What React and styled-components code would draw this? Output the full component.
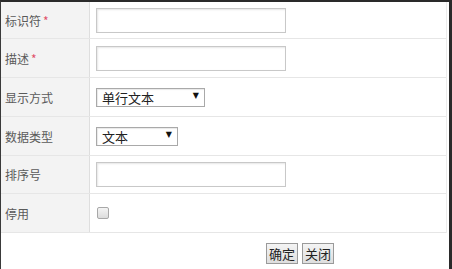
import React from "react";
import styled, { createGlobalStyle } from "styled-components";

const Global = createGlobalStyle`
  html, body { margin: 0; padding: 0; background: #fff; }
  body { font-family: "Noto Sans CJK SC", "Microsoft YaHei", sans-serif; }
`;

const Frame = styled.div`
  box-sizing: border-box;
  width: 452px;
  height: 269px;
  border-top: 2px solid #2a2a2a;
  border-left: 1px solid #3a3a3a;
  border-right: 3px solid #2a2a2a;
  background: #fff;
  display: flex;
  flex-direction: column;
`;

const Table = styled.div`
  display: flex;
  flex-direction: column;
  margin-right: 2px;
  border-right: 1px solid #ececec;
`;

const Row = styled.div`
  box-sizing: border-box;
  display: grid;
  grid-template-columns: 89px 1fr;
  height: ${(p) => p.$h}px;
  border-bottom: 1px solid #e6e6e6;
`;

const Label = styled.div`
  background: #f3f3f3;
  border-right: 1px solid #dedede;
  display: flex;
  align-items: center;
  padding-left: 4px;
  font-size: 12px;
  color: #5a5a5a;
`;

const Star = styled.span`
  color: #e0506a;
  margin-left: 2px;
`;

const Cell = styled.div`
  display: flex;
  align-items: center;
  padding-left: 6px;
`;

const TextInput = styled.input`
  box-sizing: border-box;
  width: 190px;
  height: 25px;
  border: 1px solid #c8c8c8;
  box-shadow: inset 1px 1px 2px #e6e6e6;
  outline: none;
  margin: 0;
  padding: 0 4px;
  background: #fff;
`;

const SelectBox = styled.div`
  position: relative;
  box-sizing: border-box;
  width: ${(p) => p.$w}px;
  height: 19px;
  border: 1px solid #a9a9a9;
  box-shadow: inset 1px 1px 1px #e8e8e8;
  background: #fff;
  display: flex;
  align-items: center;
  padding-left: 5px;
  font-size: 13px;
  color: #222;
`;

const Arrow = styled.span`
  position: absolute;
  right: 5px;
  top: 2px;
  font-size: 8px;
  color: #111;
  font-family: "DejaVu Sans", sans-serif;
`;

const Check = styled.span`
  box-sizing: border-box;
  width: 12px;
  height: 12px;
  margin-left: 1px;
  border: 1px solid #a8a8a8;
  border-radius: 2px;
  background: linear-gradient(#f4f4f4, #dcdcdc);
`;

const Footer = styled.div`
  display: flex;
  gap: 4px;
  padding-left: 265px;
  padding-top: 10px;
`;

const Button = styled.button`
  box-sizing: border-box;
  height: 21px;
  padding: 0 2px;
  margin: 0;
  border: 1px solid #9a9a9a;
  background: linear-gradient(#f4f4f4, #dedede);
  font-family: "Noto Sans CJK SC", sans-serif;
  font-size: 13px;
  line-height: 17px;
  color: #222;
`;

const rows = [
  { label: "标识符", req: true, kind: "input", h: 37 },
  { label: "描述", req: true, kind: "input", h: 39 },
  { label: "显示方式", kind: "select", value: "单行文本", w: 109, h: 39 },
  { label: "数据类型", kind: "select", value: "文本", w: 82, h: 39 },
  { label: "排序号", kind: "input", h: 38 },
  { label: "停用", kind: "check", h: 39 },
];

export default function App() {
  return (
    <>
      <Global />
      <Frame>
        <Table>
          {rows.map((r) => (
            <Row key={r.label} $h={r.h}>
              <Label>
                {r.label}
                {r.req && <Star>*</Star>}
              </Label>
              <Cell>
                {r.kind === "input" && <TextInput type="text" />}
                {r.kind === "select" && (
                  <SelectBox $w={r.w}>
                    {r.value}
                    <Arrow>▼</Arrow>
                  </SelectBox>
                )}
                {r.kind === "check" && <Check />}
              </Cell>
            </Row>
          ))}
        </Table>
        <Footer>
          <Button>确定</Button>
          <Button>关闭</Button>
        </Footer>
      </Frame>
    </>
  );
}
